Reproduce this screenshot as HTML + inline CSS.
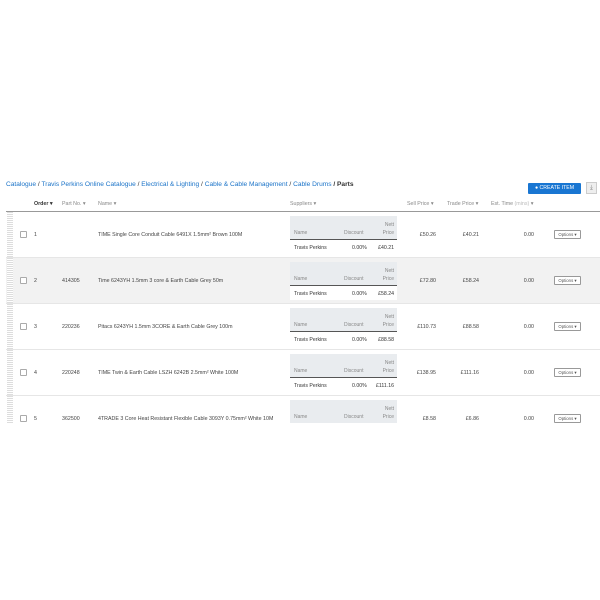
<!DOCTYPE html><html><head><style>
body{margin:0;width:600px;height:600px;background:#fff;font-family:"Liberation Sans",sans-serif;position:relative;overflow:hidden;color:#333}
.a{position:absolute;white-space:nowrap}
.bc{top:181px;left:6px;font-size:6.6px;color:#1a73c8}
.bc b{color:#333;font-weight:bold}.bc span{color:#333}
.btn{top:183px;left:528px;width:53px;height:11px;background:#1976d2;border-radius:1px;color:#fff;font-size:5.2px;line-height:11px;text-align:center}
.dl{top:182px;left:586px;width:11px;height:12px;background:#eee;border:1px solid #ccc;box-sizing:border-box;font-size:6px;color:#777;text-align:center;line-height:10px}
.h{top:201px;font-size:5.3px;color:#888}
.row{position:absolute;left:6px;width:594px;height:46px;border-bottom:1px solid #e6e6e6;box-sizing:border-box}
.row .t{position:absolute;font-size:5.3px;color:#444;white-space:nowrap;top:20px}
.handle{position:absolute;left:1px;top:0;width:6px;height:100%;background:repeating-linear-gradient(#ddd 0 1px,#fff 1px 2px)}
.cb{position:absolute;left:14px;top:19px;width:5px;height:5px;border:1px solid #aaa;border-radius:1px;background:#fff}
.inner{position:absolute;left:284px;top:4px;width:107px;height:38px;background:#fff}
.ih{height:23px;background:#e9ecef;border-bottom:1px solid #555;position:relative}
.inner div.x{position:absolute;font-size:5px;color:#888}
.inner div.y{position:absolute;font-size:5.2px;color:#333;top:29px}
.opt{position:absolute;left:548px;top:18px;width:25px;height:7px;border:1px solid #999;border-radius:1px;font-size:4.3px;line-height:7px;text-align:center;color:#555;background:#fff}
</style></head><body>
<div class="a bc">Catalogue <span>/</span> Travis Perkins Online Catalogue <span>/</span> Electrical &amp; Lighting <span>/</span> Cable &amp; Cable Management <span>/</span> Cable Drums <b>/ Parts</b></div>
<div class="a btn">&#9679; CREATE ITEM</div>
<div class="a dl">&#10515;</div>
<div class="a h" style="left:34px;color:#333;font-weight:bold">Order ▾</div>
<div class="a h" style="left:62px">Part No. ▾</div>
<div class="a h" style="left:98px">Name ▾</div>
<div class="a h" style="left:290px">Suppliers ▾</div>
<div class="a h" style="left:407px">Sell Price ▾</div>
<div class="a h" style="left:447px">Trade Price ▾</div>
<div class="a h" style="left:491px">Est. Time <span style="color:#bbb">(mins)</span> ▾</div>
<div class="a" style="top:211px;left:6px;width:594px;height:1px;background:#999"></div>

<div class="row" style="top:212px"><div class="handle"></div><div class="cb"></div><div class="t" style="left:28px">1</div><div class="t" style="left:92px">TIME Single Core Conduit Cable 6491X 1.5mm² Brown 100M</div>
<div class="inner"><div class="ih"><div class="x" style="left:4px;top:14px">Name</div><div class="x" style="left:54px;top:14px">Discount</div><div class="x" style="right:3px;top:6px">Nett</div><div class="x" style="right:3px;top:14px">Price</div></div><div class="y" style="left:4px">Travis Perkins</div><div class="y" style="left:62px">0.00%</div><div class="y" style="right:3px">£40.21</div></div>
<div class="t" style="right:164px">£50.26</div><div class="t" style="right:121px">£40.21</div><div class="t" style="right:66px">0.00</div><div class="opt">Options ▾</div></div>

<div class="row" style="top:258px;background:#f2f2f2"><div class="handle"></div><div class="cb"></div><div class="t" style="left:28px">2</div><div class="t" style="left:56px">414305</div><div class="t" style="left:92px">Time 6243YH 1.5mm 3 core &amp; Earth Cable Grey 50m</div>
<div class="inner"><div class="ih"><div class="x" style="left:4px;top:14px">Name</div><div class="x" style="left:54px;top:14px">Discount</div><div class="x" style="right:3px;top:6px">Nett</div><div class="x" style="right:3px;top:14px">Price</div></div><div class="y" style="left:4px">Travis Perkins</div><div class="y" style="left:62px">0.00%</div><div class="y" style="right:3px">£58.24</div></div>
<div class="t" style="right:164px">£72.80</div><div class="t" style="right:121px">£58.24</div><div class="t" style="right:66px">0.00</div><div class="opt">Options ▾</div></div>

<div class="row" style="top:304px"><div class="handle"></div><div class="cb"></div><div class="t" style="left:28px">3</div><div class="t" style="left:56px">220236</div><div class="t" style="left:92px">Pitacs 6243YH 1.5mm 3CORE &amp; Earth Cable Grey 100m</div>
<div class="inner"><div class="ih"><div class="x" style="left:4px;top:14px">Name</div><div class="x" style="left:54px;top:14px">Discount</div><div class="x" style="right:3px;top:6px">Nett</div><div class="x" style="right:3px;top:14px">Price</div></div><div class="y" style="left:4px">Travis Perkins</div><div class="y" style="left:62px">0.00%</div><div class="y" style="right:3px">£88.58</div></div>
<div class="t" style="right:164px">£110.73</div><div class="t" style="right:121px">£88.58</div><div class="t" style="right:66px">0.00</div><div class="opt">Options ▾</div></div>

<div class="row" style="top:350px"><div class="handle"></div><div class="cb"></div><div class="t" style="left:28px">4</div><div class="t" style="left:56px">220248</div><div class="t" style="left:92px">TIME Twin &amp; Earth Cable LSZH 6242B 2.5mm² White 100M</div>
<div class="inner"><div class="ih"><div class="x" style="left:4px;top:14px">Name</div><div class="x" style="left:54px;top:14px">Discount</div><div class="x" style="right:3px;top:6px">Nett</div><div class="x" style="right:3px;top:14px">Price</div></div><div class="y" style="left:4px">Travis Perkins</div><div class="y" style="left:62px">0.00%</div><div class="y" style="right:3px">£111.16</div></div>
<div class="t" style="right:164px">£138.95</div><div class="t" style="right:121px">£111.16</div><div class="t" style="right:66px">0.00</div><div class="opt">Options ▾</div></div>

<div class="row" style="top:396px;height:27px;border:none;overflow:hidden"><div class="handle"></div><div class="cb"></div><div class="t" style="left:28px">5</div><div class="t" style="left:56px">362500</div><div class="t" style="left:92px">4TRADE 3 Core Heat Resistant Flexible Cable 3093Y 0.75mm² White 10M</div>
<div class="inner"><div class="ih"><div class="x" style="left:4px;top:14px">Name</div><div class="x" style="left:54px;top:14px">Discount</div><div class="x" style="right:3px;top:6px">Nett</div><div class="x" style="right:3px;top:14px">Price</div></div></div>
<div class="t" style="right:164px">£8.58</div><div class="t" style="right:121px">£6.86</div><div class="t" style="right:66px">0.00</div><div class="opt">Options ▾</div></div>
</body></html>
